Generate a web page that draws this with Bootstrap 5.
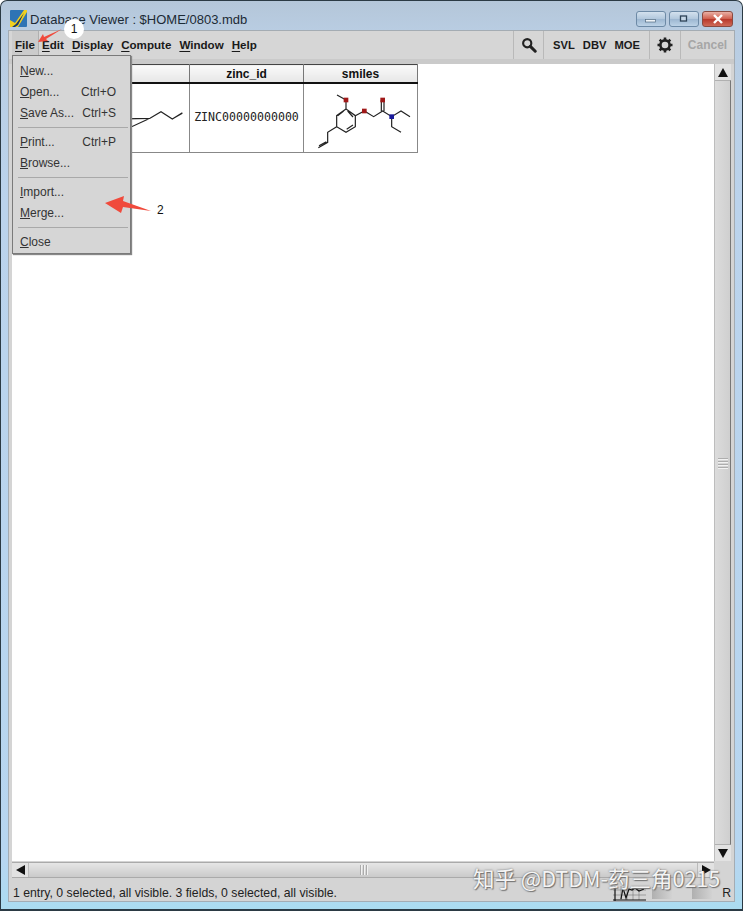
<!DOCTYPE html>
<html lang="zh-CN">
<head>
  <meta charset="UTF-8" />
  <meta name="viewport" content="width=device-width, initial-scale=1" />
  <title>Database Viewer</title>
  <link href="https://cdn.jsdelivr.net/npm/bootstrap@5.3.0/dist/css/bootstrap.min.css" rel="stylesheet">
  <style>
    html, body { height: 911px; overflow: hidden; }
    body { background: #fff; font-family: "Liberation Sans", Arial, sans-serif; color: #111; }
    .win-frame {
      height: 911px; position: relative; padding: 0 7px; border: 1px solid #2b3a44; border-bottom-width: 2px; border-radius: 7px 7px 0 0;
      background: linear-gradient(#b4c6d9 0, #b9cde2 30px, #bbd3ec 200px, #b7d6f0 860px, #aadcf0 911px);
    }
    .win-title { height: 29px; padding-top: 9px; font-size: 13px; line-height: 17px; color: #1c2a35; flex: none; }
    .win-title .app-logo { margin-right: 3px; margin-left: 2px; }
    .win-title .title-text { margin-top: 1px; }
    .win-btns { margin-top: 1px; margin-right: 2px; }
    .win-btn {
      width: 30px; height: 16px; border: 1px solid #6d8aa6; border-radius: 3px; display: flex; align-items: center; justify-content: center;
      background: linear-gradient(#d3e1ee, #b2c8dd 48%, #9db7d1 52%, #bcd2e6); margin-left: 3px;
    }
    .win-btn.btn-x { width: 31px; border-color: #8a4a40; background: linear-gradient(#e9b0a5, #d0604f 48%, #b8392b 52%, #cf6a58); }
    .inner-pane { height: 872px; background: #d4d4d4; border: 1px solid #a4acb3; padding: 0 3px 0 3px; flex: none; }
    .menu-strip { height: 33px; margin: 0 -3px; background: #d6d6d6; border-bottom: 5px solid #cacaca; padding-left: 3px; flex: none; }
    .menu-word { font-weight: 700; font-size: 11.6px; color: #1a1a1a; line-height: 28px; margin-right: 8px; }
    .menu-word u { text-underline-offset: 2px; }
    .menu-word.opened { background: #cbcbcb; padding: 0 3px; margin-right: 3px; border-right: 1px solid #b0b0b0; }
    .tool-cell { height: 28px; display: flex; align-items: center; justify-content: center; border-left: 1px solid #b9b9b9; font-weight: 700; font-size: 11.2px; flex: none; }
    .tool-cell.cell-find { width: 30px; }
    .tool-cell.cell-apps { width: 106px; gap: 8px; color: #1a1a1a; }
    .tool-cell.cell-gear { width: 31px; }
    .tool-cell.cell-cancel { width: 54px; color: #a6a6a6; font-size: 12px; }
    .view-row { height: 797px; flex: none; }
    .canvas-area { background: #fff; width: 702px; flex: none; }
    .grid-tbl { border-collapse: collapse; table-layout: fixed; width: 405px; }
    .grid-tbl th { height: 18px; padding: 1px 0 0; line-height: 16px; font-size: 12px; font-weight: 700; text-align: center; color: #111; border: 1px solid #777; border-top-color: #444; border-bottom: 2px solid #111; background: linear-gradient(#fafafa, #e6e6e6); }
    .grid-tbl td { height: 68px; padding: 0; border: 1px solid #888; text-align: center; vertical-align: middle; }
    .zinc-cell { font-family: "DejaVu Sans Mono", "Liberation Mono", monospace; font-size: 11.6px; color: #222; }
    .scroll-v { width: 17px; background: #d8d8d8; display: flex; flex-direction: column; border-left: 1px solid #bdbdbd; }
    .scroll-h { height: 16px; margin-top: 1px; background: #dcdcdc; display: flex; border-top: 1px solid #aaa; border-bottom: 1px solid #aaa; width: 702px; flex: none; }
    .scroll-btn { width: 16px; height: 16px; display: flex; align-items: center; justify-content: center; background: #e2e2e2; flex: none; }
    .scroll-h .scroll-btn { height: 14px; }
    .thumb-v { flex: 1 1 auto; background: linear-gradient(90deg, #dcdcdc, #cfcfcf); border-top: 1px solid #b0b0b0; border-bottom: 1px solid #b0b0b0; border-right: 1px solid #777; display: flex; flex-direction: column; align-items: center; justify-content: center; gap: 2px; }
    .grip-v { width: 10px; height: 1px; background: #aeaeae; box-shadow: 0 1px 0 #f2f2f2; }
    .thumb-h { flex: 1 1 auto; background: linear-gradient(#e6e6e6, #cacaca); display: flex; align-items: center; justify-content: center; gap: 2px; border-left: 1px solid #bbb; border-right: 1px solid #bbb; }
    .grip-h { width: 1px; height: 10px; background: #ababab; box-shadow: 1px 0 0 #f2f2f2; }
    .status-strip { height: 16px; margin-top: 7px; padding-left: 1px; font-size: 12.25px; color: #222; line-height: 16px; flex: none; }
    .status-meter { margin-right: 6px; }
    .status-box { width: 20px; height: 12px; background: linear-gradient(90deg, #b0b0b0, #d2d2d2); }
    .box-gap { margin-right: 20px; }
    .r-mark { margin-left: 10px; }
    .menu-drop {
      position: absolute; left: 11px; top: 54px; width: 119px; height: 199px; background: #d6d6d6; border: 1px solid #7a7a7a;
      box-shadow: 1px 1px 1px #888; font-size: 12px; color: #333; padding-top: 5px; z-index: 5;
    }
    .drop-row { height: 21px; line-height: 21px; padding-left: 7px; padding-right: 14px; display: flex; justify-content: space-between; }
    .drop-rule { height: 1px; background: #a9a9a9; margin: 3px 2px 4px 5px; border: 0; opacity: 1; }
    .over-mark { position: absolute; z-index: 6; }
    .num-badge { background: #fff; border-radius: 50%; width: 20px; height: 20px; font-size: 12px; text-align: center; line-height: 20px; color: #111; }
    .water-mark { left: 472px; top: 868px; font-family: "Noto Sans CJK SC", sans-serif; font-size: 21.5px; color: #f4f4f4; text-shadow: 0 0 2px #666, 1px 1px 1px #777; line-height: 18px; white-space: nowrap; }
  </style>
</head>

<body>
  <div class="win-frame d-flex flex-column">

    <!-- title bar -->
    <div class="win-title d-flex align-items-start">
      <svg class="app-logo flex-none" width="17" height="17" viewBox="0 0 17 17">
        <rect width="17" height="17" rx="1" fill="#2e74b5"/>
        <path d="M0 17 L0 10 L5 13 L14 0 L17 0 L17 2 L8 17 Z" fill="#f0d020"/>
        <path d="M2 17 L6 14 L14 3 L8 15 L5 17 Z" fill="#17386a"/>
      </svg>
      <span class="title-text">Database Viewer : $HOME/0803.mdb</span>
      <div class="win-btns d-flex ms-auto">
        <div class="win-btn"><svg width="14" height="8"><rect x="1.5" y="4.5" width="10" height="2.5" fill="#eef3f7" stroke="#516a80" stroke-width=".7"/></svg></div>
        <div class="win-btn"><svg width="12" height="10"><rect x="2.5" y="2" width="6" height="5" fill="#c5d6e6" stroke="#2e4357" stroke-width="1.3"/></svg></div>
        <div class="win-btn btn-x"><svg width="12" height="10"><path d="M2 1 L10 9 M10 1 L2 9" stroke="#fff" stroke-width="2.4"/></svg></div>
      </div>
    </div>

    <div class="inner-pane d-flex flex-column">
      <!-- menu and tools -->
      <div class="menu-strip d-flex align-items-start">
        <span class="menu-word opened"><u>F</u>ile</span>
        <span class="menu-word"><u>E</u>dit</span>
        <span class="menu-word"><u>D</u>isplay</span>
        <span class="menu-word"><u>C</u>ompute</span>
        <span class="menu-word"><u>W</u>indow</span>
        <span class="menu-word"><u>H</u>elp</span>
        <div class="tool-cell cell-find ms-auto">
          <svg width="16" height="16" viewBox="0 0 18 18"><circle cx="7" cy="7" r="4.6" fill="none" stroke="#222" stroke-width="2.4"/><path d="M10.5 10.5 L16 16" stroke="#222" stroke-width="3.4" stroke-linecap="round"/></svg>
        </div>
        <div class="tool-cell cell-apps">
          <span>SVL</span><span>DBV</span><span>MOE</span>
        </div>
        <div class="tool-cell cell-gear">
          <svg width="16" height="16" viewBox="0 0 16 16"><circle cx="8" cy="8" r="4.6" fill="none" stroke="#222" stroke-width="2.6"/><path d="M8 0.5 V3.5 M8 12.5 V15.5 M0.5 8 H3.5 M12.5 8 H15.5 M2.7 2.7 L4.8 4.8 M11.2 11.2 L13.3 13.3 M13.3 2.7 L11.2 4.8 M4.8 11.2 L2.7 13.3" stroke="#222" stroke-width="2.6"/></svg>
        </div>
        <div class="tool-cell cell-cancel">Cancel</div>
      </div>

      <!-- database grid -->
      <div class="view-row d-flex">
        <div class="canvas-area">
          <table class="grid-tbl">
            <colgroup><col style="width:177px"><col style="width:114px"><col style="width:114px"></colgroup>
            <tr><th></th><th>zinc_id</th><th>smiles</th></tr>
            <tr>
              <td>
                <svg class="d-block ms-auto" width="100" height="68" viewBox="-33 72 300 204"><path d="M-5 178 L150 175 M-5 200 L95 200 L150 175 L183 155 L217 177 L247 158 M222 174 L247 160" fill="none" stroke="#222" stroke-width="3.4"/></svg>
              </td>
              <td class="zinc-cell">ZINC00000000000</td>
              <td>
                <svg width="114" height="68" viewBox="9 -3 342 204" class="d-block">
                  <g fill="none" stroke="#222" stroke-width="3.6">
                    <path d="M108 30 L135 45 M135 45 V72 L163 92 V125 L135 142 L107 125 V92 L135 72 M128 78 L110 92 M156 96 L140 78 M156 120 L137 133"/>
                    <path d="M163 92 L190 78 L218 95 L245 78 L272 95 L300 78 L327 95 M241 78 V45 M249 78 V45 M272 95 V125 L300 142"/>
                    <path d="M107 125 L80 142 V172 L52 188 M76 170 L54 182"/>
                  </g>
                  <rect x="128" y="38" width="14" height="14" fill="#a01818"/>
                  <rect x="183" y="71" width="14" height="14" fill="#a01818"/>
                  <rect x="238" y="38" width="14" height="14" fill="#a01818"/>
                  <rect x="265" y="88" width="14" height="14" fill="#1a1a9a"/>
                </svg>
              </td>
            </tr>
          </table>
        </div>
        <div class="scroll-v">
          <div class="scroll-btn"><svg width="10" height="9"><path d="M5 0 L10 9 H0 Z" fill="#111"/></svg></div>
          <div class="thumb-v"><div class="grip-v"></div><div class="grip-v"></div><div class="grip-v"></div><div class="grip-v"></div></div>
          <div class="scroll-btn"><svg width="10" height="9"><path d="M5 9 L10 0 H0 Z" fill="#111"/></svg></div>
        </div>
      </div>

      <!-- horizontal scrollbar -->
      <div class="scroll-h">
        <div class="scroll-btn"><svg width="9" height="10"><path d="M0 5 L9 0 V10 Z" fill="#111"/></svg></div>
        <div class="thumb-h"><div class="grip-h"></div><div class="grip-h"></div><div class="grip-h"></div></div>
        <div class="scroll-btn"><svg width="9" height="10"><path d="M9 5 L0 0 V10 Z" fill="#111"/></svg></div>
      </div>

      <!-- status bar -->
      <div class="status-strip d-flex align-items-center">
        <span>1 entry, 0 selected, all visible. 3 fields, 0 selected, all visible.</span>
        <div class="ms-auto d-flex align-items-center">
          <svg class="status-meter" width="33" height="15" viewBox="0 0 33 15"><path d="M0 4 H33 M0 9 H33 M8 0 V14 M14 0 V14 M20 0 V14 M26 0 V14" fill="none" stroke="#666" stroke-width=".5"/><path d="M0 14 H33 M2 0 V15 M8 13 L10 2 L13 12 L16 3 L19 4 L22 2 L26 5 L31 3" fill="none" stroke="#111" stroke-width="1.2"/></svg>
          <div class="status-box box-gap"></div><div class="status-box"></div>
          <span class="r-mark">R</span>
        </div>
      </div>
    </div>

    <!-- File menu opened -->
    <div class="menu-drop">
      <div class="drop-row"><span><u>N</u>ew...</span></div>
      <div class="drop-row"><span><u>O</u>pen...</span><span>Ctrl+O</span></div>
      <div class="drop-row"><span><u>S</u>ave As...</span><span>Ctrl+S</span></div>
      <hr class="drop-rule">
      <div class="drop-row"><span><u>P</u>rint...</span><span>Ctrl+P</span></div>
      <div class="drop-row"><span><u>B</u>rowse...</span></div>
      <hr class="drop-rule">
      <div class="drop-row"><span><u>I</u>mport...</span></div>
      <div class="drop-row"><span><u>M</u>erge...</span></div>
      <hr class="drop-rule">
      <div class="drop-row"><span><u>C</u>lose</span></div>
    </div>

    <!-- annotations -->
    <div class="over-mark num-badge" style="left:63px;top:18px">1</div>
    <svg class="over-mark" style="left:35px;top:27px" width="30" height="16" viewBox="0 0 30 16"><path d="M2 14 L7 6 L8 9 L26 1 L10 11 L12 13 Z" fill="#f04a3c"/></svg>
    <svg class="over-mark" style="left:103px;top:193px" width="48" height="20" viewBox="0 0 48 20"><path d="M1 9 L20 2 L19 7 L47 17 L19 13 L17 19 Z" fill="#f04a3c"/></svg>
    <div class="over-mark" style="left:156px;top:202px;font-size:12px;line-height:14px">2</div>
    <div class="over-mark water-mark">知乎 @DTDM-药三角0215</div>
  </div>

  <script src="https://cdn.jsdelivr.net/npm/bootstrap@5.3.0/dist/js/bootstrap.bundle.min.js"></script>
</body>
</html>
